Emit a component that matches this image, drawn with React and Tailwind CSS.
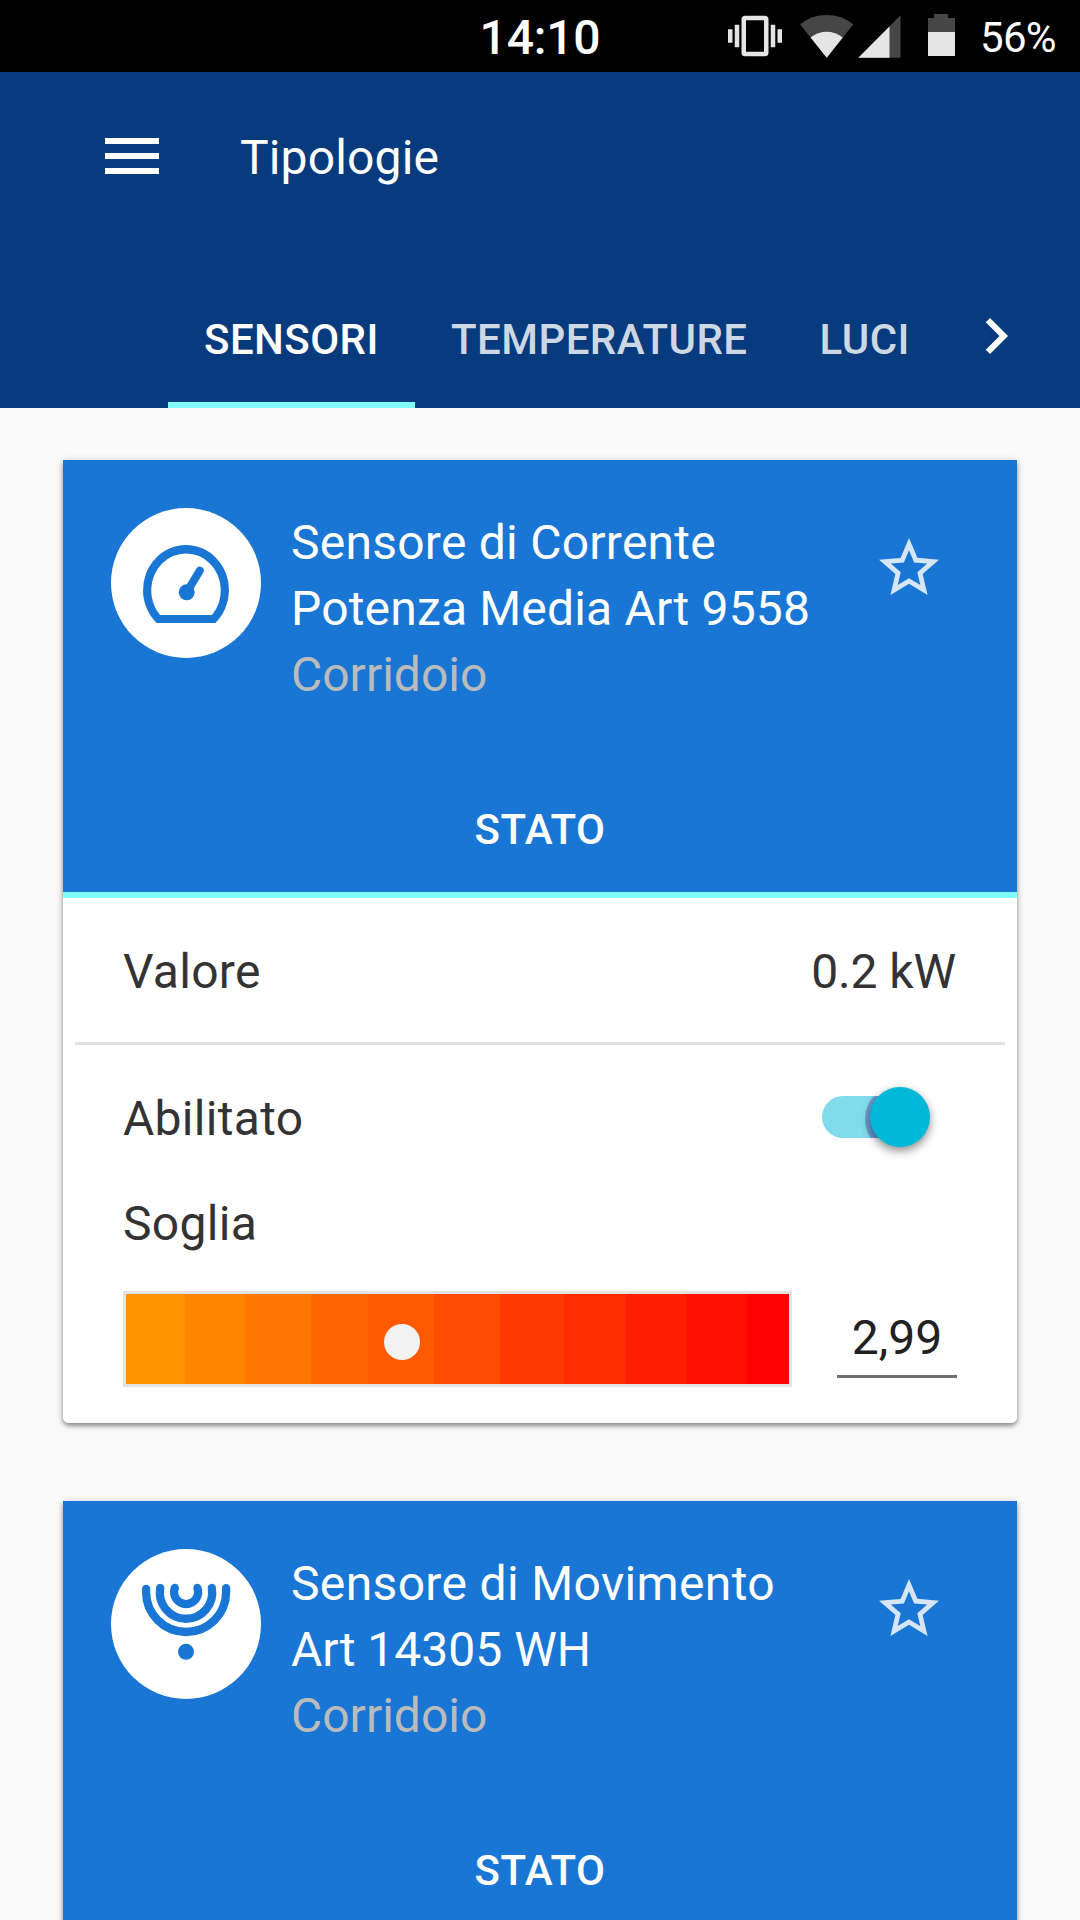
import React from 'react';

const thresholdSteps = [
  { color: '#ff9400', width: 59 },
  { color: '#ff8500', width: 60 },
  { color: '#ff7700', width: 66 },
  { color: '#ff6800', width: 57 },
  { color: '#ff5a00', width: 66 },
  { color: '#ff4b00', width: 66 },
  { color: '#ff3a00', width: 64 },
  { color: '#ff2c00', width: 62 },
  { color: '#ff1e00', width: 60 },
  { color: '#ff1000', width: 61 },
  { color: '#ff0200', width: 42 },
];

function VibrateIcon() {
  return (
    <svg viewBox="0 0 24 24" className="h-[54px] w-[54px]" fill="#e5e5e5">
      <path d="M0 15h2V9H0v6zm3 2h2V7H3v10zm19-8v6h2V9h-2zm-3 8h2V7h-2v10zM16.5 3h-9C6.67 3 6 3.67 6 4.5v15c0 .83.67 1.5 1.5 1.5h9c.83 0 1.5-.67 1.5-1.5v-15c0-.83-.67-1.5-1.5-1.5zM16 19H8V5h8v14z" />
    </svg>
  );
}

function WifiIcon() {
  return (
    <svg viewBox="0 0 54 43" className="ml-[18px] h-[43px] w-[54px]">
      <path d="M0 9.3Q11.5 0 26.7 0T53.4 9.3L26.7 42.7Z" fill="#464646" />
      <path d="M10.6 22.4Q18 16.8 26.7 16.8T42.8 22.4L26.7 42.7Z" fill="#e5e5e5" />
    </svg>
  );
}

function SignalIcon() {
  return (
    <svg viewBox="0 0 43 43" className="ml-1 h-[43px] w-[43px]">
      <path d="M0.3 42.7 42.5 0.3V42.7Z" fill="#464646" />
      <path d="M0.3 42.7 31.5 11.4V42.7Z" fill="#e5e5e5" />
    </svg>
  );
}

function BatteryIcon() {
  return (
    <svg viewBox="0 0 27 42" className="mb-[2px] ml-[27px] h-[42px] w-[27px]">
      <path d="M6 0H20V4H27V18.5H0V4H6Z" fill="#464646" />
      <path d="M0 18H27V42H0Z" fill="#e5e5e5" />
    </svg>
  );
}

function StatusBar() {
  return (
    <div className="grid h-[72px] grid-cols-[1fr_auto_1fr] items-center bg-black text-white">
      <span />
      <span className="pt-[3px] text-[48px] leading-[69px] font-medium tracking-[-0.2px]">14:10</span>
      <div className="flex items-center justify-end pr-6">
        <VibrateIcon />
        <WifiIcon />
        <SignalIcon />
        <BatteryIcon />
        <span className="ml-[25px] w-[76px] pt-1 text-[42px] leading-[68px] tracking-[-0.7px] whitespace-nowrap">56%</span>
      </div>
    </div>
  );
}

function Tab({ label, active }) {
  return (
    <div
      className={
        active
          ? 'flex h-[138px] w-[247px] items-center border-b-6 border-[#80ffff] px-9 pt-[8px] text-white'
          : 'flex h-[138px] items-center border-b-6 border-transparent px-9 pt-[8px] text-[#ced8e5]'
      }
    >
      <span className="text-[42px] leading-none font-medium tracking-[0.45px]">{label}</span>
    </div>
  );
}

function Header() {
  return (
    <header className="flex h-[336px] flex-col justify-between bg-[#083b7d] text-white">
      <div className="flex h-[168px] items-center pl-[105px]">
        <div className="flex w-[54px] flex-col gap-[9px]">
          <div className="h-[6px] bg-white" />
          <div className="h-[6px] bg-white" />
          <div className="h-[6px] bg-white" />
        </div>
        <h1 className="ml-[81px] pt-1 text-[48px] leading-[66px] tracking-[0.15px]">Tipologie</h1>
      </div>
      <nav className="flex items-end pl-[168px]">
        <Tab label="SENSORI" active />
        <Tab label="TEMPERATURE" />
        <Tab label="LUCI" />
        <svg viewBox="0 0 24 24" className="mr-12 mb-9 ml-auto h-[72px] w-[72px]" fill="white">
          <path d="M10 6L8.59 7.41 13.17 12l-4.58 4.59L10 18l6-6z" />
        </svg>
      </nav>
    </header>
  );
}

function GaugeIcon() {
  return (
    <svg viewBox="0 0 150 150" className="h-[150px] w-[150px]">
      <path
        fillRule="evenodd"
        fill="#1976d4"
        d="M45.7 115A43 45 0 1 1 104.3 115ZM49 107H101A34.8 37 0 1 0 49 107Z"
      />
      <circle cx="75.7" cy="84.3" r="8" fill="#1976d4" />
      <path d="M75.7 84.3 88.8 62.6" stroke="#1976d4" strokeWidth="8" strokeLinecap="round" />
    </svg>
  );
}

function MotionIcon() {
  return (
    <svg viewBox="0 0 150 150" className="h-[150px] w-[150px]">
      <g fill="none" stroke="#1976d4" strokeWidth="8.3" strokeLinecap="round">
        <path d="M35.1 40V43A40 40 0 0 0 115.1 43V39.2" />
        <path d="M49.2 39A26.2 26.2 0 1 0 100.8 39" />
        <path d="M63.8 39A12 12 0 1 0 86.4 39" />
      </g>
      <circle cx="75" cy="102.8" r="8" fill="#1976d4" />
    </svg>
  );
}

function CardHeader({ icon, children }) {
  return (
    <div className="flex h-[438px] flex-col justify-between border-b-6 border-[#80ffff] bg-[#1976d4] text-white">
      <div className="flex pt-12 pl-12">
        <div className="h-[150px] w-[150px] shrink-0 rounded-full bg-white">{icon}</div>
        <div className="ml-[30px] w-[540px] pt-[2px] text-[48px] leading-[66px]">
          <h2 className="flex flex-col">{children}</h2>
          <p className="text-[#b9bbbc]">Corridoio</p>
        </div>
        <svg viewBox="0 0 24 24" className="mt-6 ml-[42px] h-[72px] w-[72px]" fill="#d7e6f7">
          <path d="M22 9.24l-7.19-.62L12 2 9.19 8.63 2 9.24l5.46 4.73L5.82 21 12 17.27 18.18 21l-1.63-7.03L22 9.24zM12 15.4l-3.76 2.27 1-4.28-3.32-2.88 4.38-.38L12 6.1l1.71 4.04 4.38.38-3.32 2.88 1 4.28L12 15.4z" />
        </svg>
      </div>
      <div className="pb-8 text-center text-[42px] leading-[60px] font-medium tracking-[0.5px]">STATO</div>
    </div>
  );
}

function Switch() {
  return (
    <div className="relative mr-[30px] h-[42px] w-[105px]">
      <div className="relative h-[42px] w-[105px] overflow-hidden rounded-full bg-[#80dcea]">
        <div className="absolute -top-[12px] left-[43px] h-[70px] w-[70px] rounded-full bg-[#6c9bd2]" />
      </div>
      <div className="absolute -top-[9px] left-[48px] h-[60px] w-[60px] rounded-full bg-[#00b8d8] shadow-[0_4px_10px_rgba(0,0,0,0.45)]" />
    </div>
  );
}

function ThresholdBar() {
  return (
    <div className="relative flex h-24 w-[669px] border-3 border-[#e3e3e3]">
      {thresholdSteps.map((s) => (
        <div key={s.color} style={{ backgroundColor: s.color, width: s.width }} />
      ))}
      <div className="absolute top-[30px] left-[258px] h-9 w-9 rounded-full bg-[#f3f3f3]" />
    </div>
  );
}

function Card({ children }) {
  return (
    <div className="rounded-b-[6px] shadow-[0_3px_4px_rgba(0,0,0,0.36),0_1px_9px_rgba(0,0,0,0.16)]">
      <section className="overflow-hidden rounded-b-[6px] bg-white">{children}</section>
    </div>
  );
}

export default function App() {
  return (
    <div className="h-[1920px] w-[1080px] overflow-hidden bg-[#fafafa] font-['Roboto',sans-serif]">
      <StatusBar />
      <Header />
      <main className="flex flex-col gap-[78px] px-[63px] pt-[52px]">
        <Card>
          <CardHeader icon={<GaugeIcon />}>
            <span className="tracking-[0.25px]">Sensore di Corrente</span>
            <span className="tracking-[0.18px]">Potenza Media Art 9558</span>
          </CardHeader>
          <div className="text-[48px] leading-[66px] tracking-[0.3px] text-[#333333]">
            <div className="mx-3 flex h-[147px] items-center justify-between border-b-3 border-[#e0e0e0] px-12 pt-[3px]">
              <span>Valore</span>
              <span className="pr-[1px] tracking-[-0.1px]">0.2 kW</span>
            </div>
            <div className="flex h-[144px] items-center justify-between px-[60px]">
              <span className="pt-[3px]">Abilitato</span>
              <Switch />
            </div>
            <div className="px-[60px] pt-[2px]">Soglia</div>
            <div className="flex items-start px-[60px] pt-[34px] pb-9">
              <ThresholdBar />
              <div className="ml-[45px] h-[87px] w-[120px] border-b-3 border-[#6e6e6e] pt-[14px] text-center tracking-normal text-[#212121]">
                2,99
              </div>
            </div>
          </div>
        </Card>
        <Card>
          <CardHeader icon={<MotionIcon />}>
            <span className="tracking-[0.35px]">Sensore di Movimento</span>
            <span>Art 14305 WH</span>
          </CardHeader>
        </Card>
      </main>
    </div>
  );
}
